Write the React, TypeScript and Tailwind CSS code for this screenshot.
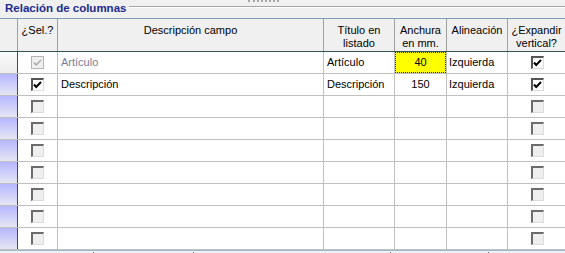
import React from 'react';

type Row = {
  sel: 'disabled' | 'checked' | 'empty';
  desc: string;
  titulo: string;
  ancho: string;
  alin: string;
  expand: 'checked' | 'empty';
  muted?: boolean;
};

const rows: Row[] = [
  { sel: 'disabled', desc: 'Artículo', titulo: 'Artículo', ancho: '40', alin: 'Izquierda', expand: 'checked', muted: true },
  { sel: 'checked', desc: 'Descripción', titulo: 'Descripción', ancho: '150', alin: 'Izquierda', expand: 'checked' },
  ...Array.from({ length: 7 }, () => ({ sel: 'empty' as const, desc: '', titulo: '', ancho: '', alin: '', expand: 'empty' as const })),
];

const Check = ({ state }: { state: 'disabled' | 'checked' | 'empty' }) => {
  if (state === 'empty') {
    return (
      <div className="w-[13px] h-[13px] bg-[#efefef] border-t-2 border-l-2 border-t-[#6c6c6c] border-l-[#6c6c6c] border-r border-b border-r-[#dcdcdc] border-b-[#dcdcdc]" />
    );
  }
  const disabled = state === 'disabled';
  return (
    <div
      className={
        disabled
          ? 'w-[13px] h-[13px] flex items-center justify-center bg-[#efefef] border border-[#b4b4b4]'
          : 'w-[13px] h-[13px] flex items-center justify-center bg-white border-t-2 border-l-2 border-t-[#555] border-l-[#555] border-r border-b border-r-[#dcdcdc] border-b-[#dcdcdc]'
      }
    >
      <svg width="9" height="8" viewBox="0 0 9 8">
        <path
          d="M1 3.5 L3.2 6 L8 1"
          fill="none"
          stroke={disabled ? '#a8a8a8' : '#000'}
          strokeWidth={disabled ? 1.4 : 2}
        />
      </svg>
    </div>
  );
};

export default function App() {
  return (
    <div
      className="relative w-[565px] h-[253px] overflow-hidden bg-[#f0f0f0] text-[11px] text-black"
      style={{ fontFamily: '"Liberation Sans", Arial, sans-serif' }}
    >
      {/* grip */}
      <div className="absolute left-[248px] top-0 w-[31px] h-[2px] border-t-2 border-dotted border-[#a8a8a8]" />

      {/* title */}
      <div className="flex h-[18px] items-start">
        <span className="ml-[5px] mt-[2px] text-[11.5px] font-bold leading-[13px] text-[#1b2a8e]">Relación de columnas</span>
        <div className="flex-1 ml-[3px] mt-[6px] h-[2px] border-t border-[#a4a4a4] border-b border-b-white" />
      </div>

      <div className="border-t border-[#7e9ebd] bg-white">
        {/* header */}
        <div className="flex h-[33px] border-b border-[#2f5454] bg-[#f0f0f0] leading-[13px] text-center">
          <div className="w-[18px] shrink-0 border-r border-[#a0a0a0]" />
          <div className="w-[40px] shrink-0 border-r border-[#a0a0a0] pt-[5px]">¿Sel.?</div>
          <div className="w-[266px] shrink-0 border-r border-[#a0a0a0] pt-[5px]">Descripción campo</div>
          <div className="w-[71px] shrink-0 border-r border-[#a0a0a0] pt-[5px]">Título en<br />listado</div>
          <div className="w-[52px] shrink-0 border-r border-[#a0a0a0] pt-[5px]">Anchura<br />en mm.</div>
          <div className="w-[61px] shrink-0 border-r border-[#a0a0a0] pt-[5px]">Alineación</div>
          <div className="w-[57px] shrink-0 pt-[5px]">¿Expandir<br />vertical?</div>
        </div>

        {/* rows */}
        {rows.map((r, i) => (
          <div key={i} className="flex h-[22px] border-b border-[#c0c0c0] leading-[13px]">
            <div
              className={
                i === 0
                  ? 'w-[18px] shrink-0 border-r border-[#2f5454] bg-linear-to-b from-[#fafafa] to-[#ececec]'
                  : 'w-[18px] shrink-0 border-r border-[#2f5454] bg-linear-to-b from-[#b6b6ff] to-[#e6e6f2]'
              }
            />
            <div className="w-[40px] shrink-0 border-r border-[#c0c0c0] flex items-center justify-center pr-[1px]">
              <Check state={r.sel} />
            </div>
            <div className={`w-[266px] shrink-0 border-r border-[#c0c0c0] flex items-center pl-[3px] ${r.muted ? 'text-[#7c7c94]' : ''}`}>
              {r.desc}
            </div>
            <div className="w-[71px] shrink-0 border-r border-[#c0c0c0] flex items-center pl-[3px]">{r.titulo}</div>
            {i === 0 ? (
              <div className="w-[52px] shrink-0 border-r border-[#c0c0c0] flex">
                <div className="flex-1 flex items-center justify-center bg-[#ffff00] border border-dotted border-[#1010c0]">
                  {r.ancho}
                </div>
              </div>
            ) : (
              <div className="w-[52px] shrink-0 border-r border-[#c0c0c0] flex items-center justify-center">{r.ancho}</div>
            )}
            <div className="w-[61px] shrink-0 border-r border-[#c0c0c0] flex items-center pl-[2px]">{r.alin}</div>
            <div className="w-[57px] shrink-0 flex items-center justify-center pl-[1px]">
              <Check state={r.expand} />
            </div>
          </div>
        ))}
      </div>

      {/* bottom edge */}
      <div className="relative h-[3px] border-t border-[#9fb8cf] bg-[#f0f0f0]">
        <span className="absolute left-[93px] top-[1px] w-[1px] h-[2px] bg-[#606060]" />
        <span className="absolute left-[193px] top-[1px] w-[1px] h-[2px] bg-[#606060]" />
        <span className="absolute left-[390px] top-[1px] w-[1px] h-[2px] bg-[#606060]" />
        <span className="absolute left-[488px] top-[1px] w-[1px] h-[2px] bg-[#606060]" />
      </div>
    </div>
  );
}
